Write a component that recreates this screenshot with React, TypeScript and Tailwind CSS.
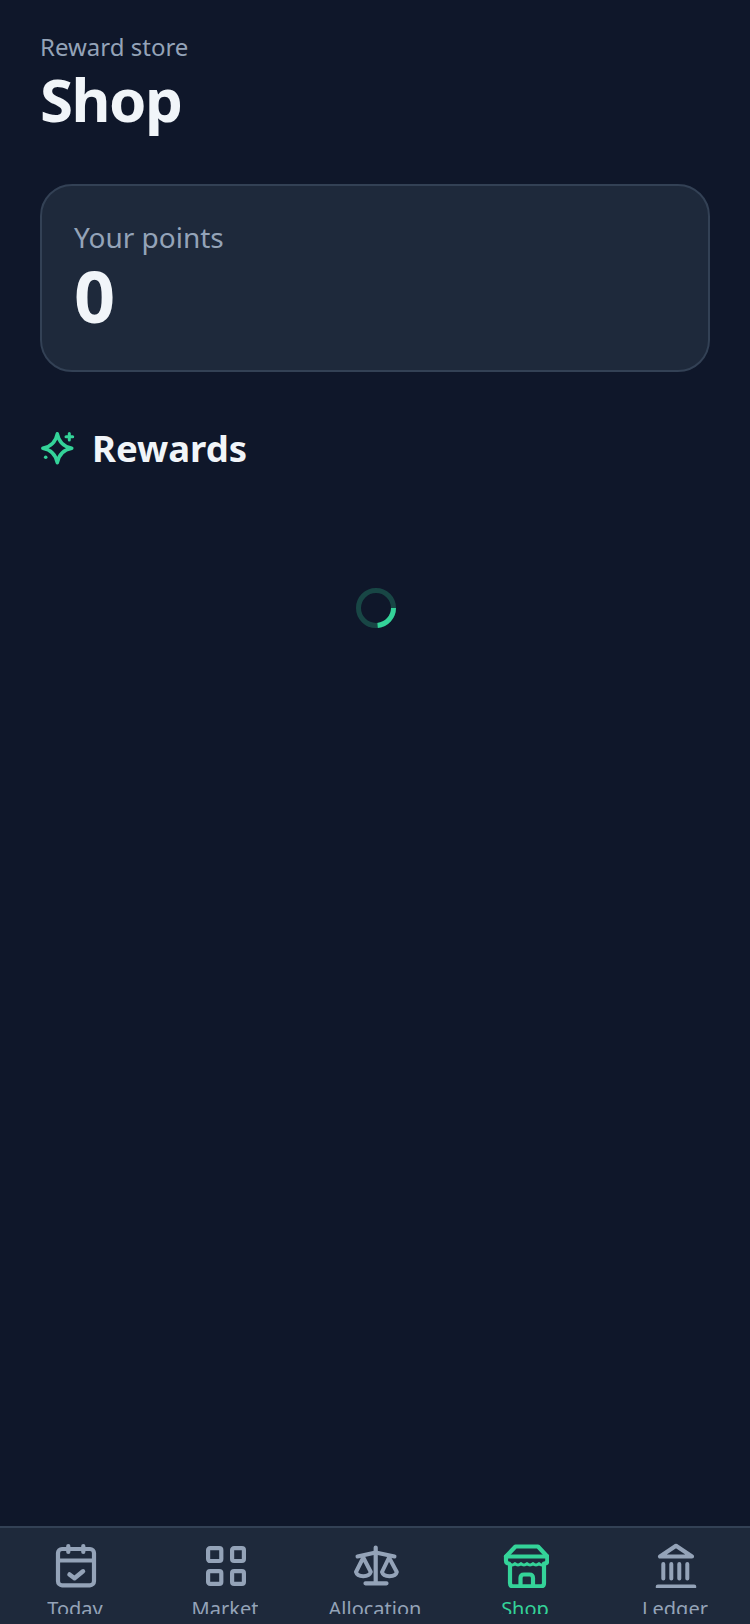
import React from "react";

const iconClass = "w-12 h-12 shrink-0";

function Today() {
  return (
    <svg viewBox="0 0 48 48" className={iconClass} fill="none" stroke="currentColor" strokeWidth="4.200" strokeLinecap="round" strokeLinejoin="round">
      <rect x="7" y="9" width="36" height="36.300" rx="4" />
      <path d="M17.300 6V12M32.300 6V12M7 20.500H43" />
      <path d="M18.500 34.500l5 3.800 8.500-7" strokeWidth="4.500" />
    </svg>
  );
}
function Market() {
  return (
    <svg viewBox="0 0 48 48" className={iconClass} fill="none" stroke="currentColor" strokeWidth="4.200" strokeLinejoin="round">
      <rect x="7.100" y="8.100" width="13.200" height="12.900" rx="2" />
      <rect x="31.100" y="8.100" width="11.800" height="12.900" rx="2" />
      <rect x="7.100" y="31.100" width="13.200" height="12.800" rx="2" />
      <rect x="31.100" y="31.100" width="11.800" height="12.800" rx="2" />
    </svg>
  );
}
function Allocation() {
  return (
    <svg viewBox="0 0 48 48" className={iconClass} fill="none" stroke="currentColor" strokeWidth="4" strokeLinecap="round" strokeLinejoin="round">
      <path d="M24.700 7.500V43M14.500 43.300H35.500" strokeWidth="4.200" />
      <path d="M6.500 16.500L24.700 12.500L43.500 16.500" />
      <path d="M12.300 17.500L5 32C6.500 37.500 18 37.500 19.800 32Z" />
      <path d="M38 17.500L31 32C32.500 37.500 44.500 37.500 45.800 32Z" />
    </svg>
  );
}
function ShopIcon() {
  return (
    <svg viewBox="0 0 48 48" className={iconClass} fill="none" stroke="currentColor" strokeWidth="4.200" strokeLinecap="round" strokeLinejoin="round">
      <path d="M8 23.500Q5 23.500 5 20.500V16.500L14.500 6.500H37L46.300 16.500V20.500Q46.300 23.500 43 23.500" />
      <path d="M5 16.500H46.300" />
      <path d="M8 23.500Q11.500 26.500 14 23.500Q17 26.500 20 23.500Q23 26.500 26 23.500Q29 26.500 32 23.500Q35 26.500 38 23.500Q41 26.500 43 23.500" strokeWidth="2.800" />
      <path d="M9 25V43Q9 46.300 12 46.300H40Q43 46.300 43 43V25" />
      <path d="M19.500 46V38Q19.500 34.500 23 34.500H28.500Q32 34.500 32 38V46" />
    </svg>
  );
}
function Ledger() {
  return (
    <svg viewBox="0 0 48 48" className={iconClass} fill="none" stroke="currentColor" strokeWidth="4" strokeLinecap="round" strokeLinejoin="round">
      <path d="M25 5.800L9 16.500H41Z" strokeWidth="4.200" />
      <path d="M12.300 24V38.500M20.300 24V38.500M28.300 24V38.500M36.300 24V38.500" />
      <path d="M6.800 46.700H43.200" strokeWidth="4.200" />
    </svg>
  );
}
function Sparkle() {
  return (
    <svg viewBox="0 0 36 36" className="w-9 h-9 shrink-0 text-[#34d399]" fill="none" stroke="currentColor" strokeWidth="3.500" strokeLinecap="round" strokeLinejoin="round">
      <path d="M17.300 3.800Q19.500 16 31.800 18.300Q19.500 20.500 17.300 32.800Q15 20.500 2.800 18.300Q15 16 17.300 3.800Z" />
      <path d="M29.300 3.500V10M26 6.700H32.700" strokeWidth="3" />
      <circle cx="5.700" cy="27.300" r="1.800" fill="currentColor" stroke="none" />
    </svg>
  );
}
function Spinner() {
  return (
    <svg viewBox="0 0 40 40" className="h-10 w-10 text-[#34d399]" fill="none" stroke="currentColor" strokeWidth="5">
      <circle cx="20" cy="20" r="17.500" opacity="0.25" />
      <path d="M37.500 20A17.500 17.500 0 0 1 21.600 37.400" />
    </svg>
  );
}

const tabs = [
  { label: "Today", Icon: Today },
  { label: "Market", Icon: Market },
  { label: "Allocation", Icon: Allocation },
  { label: "Shop", Icon: ShopIcon, active: true },
  { label: "Ledger", Icon: Ledger },
];

export default function App() {
  return (
    <div className="h-[1624px] w-[750px] overflow-hidden bg-[#0f172a] flex flex-col font-['Noto_Sans','Open_Sans',sans-serif]">
      <main className="flex-1 px-10 pt-[31px]">
        <p className="text-2xl leading-8 text-[#94a3b8]">Reward store</p>
        <h1 className="text-[60px] leading-[72px] font-bold tracking-tight text-[#f1f5f9]">Shop</h1>

        <section className="mt-[49px] h-[188px] rounded-[32px] border-2 border-[#334155] bg-[#1e293b] px-8 pt-[31px]">
          <p className="text-[28px] leading-10 text-[#94a3b8]">Your points</p>
          <p className="text-[72px] leading-[76px] font-bold text-[#f1f5f9]">0</p>
        </section>

        <div className="mt-[56px] flex items-center gap-4">
          <Sparkle />
          <h2 className="text-[36.500px] leading-10 font-bold text-[#f1f5f9]">Rewards</h2>
        </div>

        <div className="mt-[120px] flex justify-center pl-[2px]">
          <Spinner />
        </div>
      </main>

      <nav className="h-[98px] border-t-2 border-[#334155] bg-[#1e293b] grid grid-cols-5 overflow-hidden">
        {tabs.map(({ label, Icon, active }) => (
          <div key={label} className={`flex flex-col items-center pt-3 ${active ? "text-[#34d399]" : "text-[#94a3b8]"}`}>
            <Icon />
            <div className="mt-[7px] h-[19px] overflow-hidden shrink-0">
              <span className="block text-xl leading-7">{label}</span>
            </div>
          </div>
        ))}
      </nav>
    </div>
  );
}
